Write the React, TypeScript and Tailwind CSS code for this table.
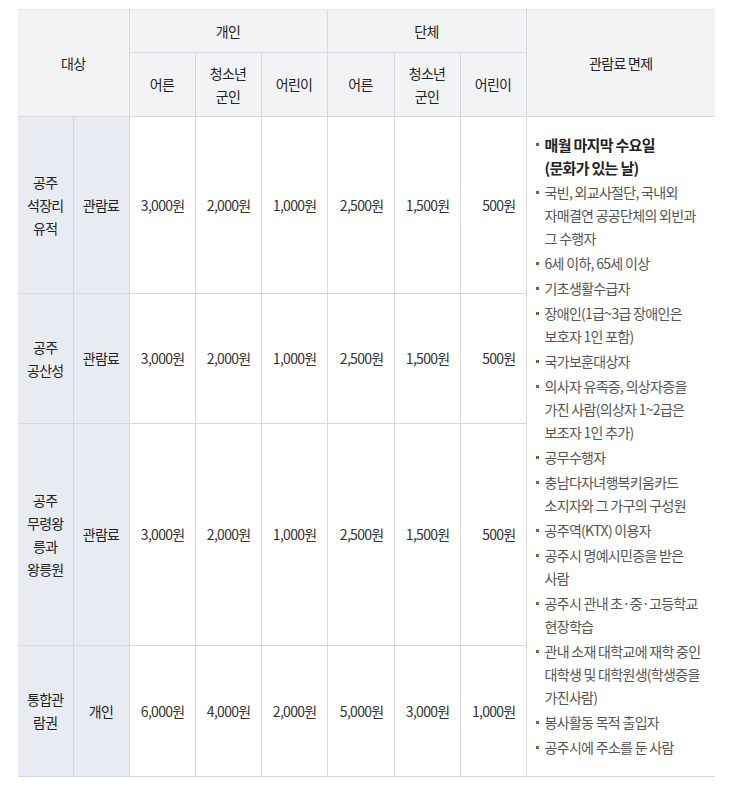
import React from 'react'

const FONT = '[font-family:"Noto_Sans_CJK_KR","Noto_Sans",sans-serif]'

type Row = {
  place: React.ReactNode
  kind: string
  prices: string[]
  height: string
}

const ROWS: Row[] = [
  {
    place: (
      <>
        공주
        <br />
        석장리
        <br />
        유적
      </>
    ),
    kind: '관람료',
    prices: ['3,000원', '2,000원', '1,000원', '2,500원', '1,500원', '500원'],
    height: 'h-[177px]',
  },
  {
    place: (
      <>
        공주
        <br />
        공산성
      </>
    ),
    kind: '관람료',
    prices: ['3,000원', '2,000원', '1,000원', '2,500원', '1,500원', '500원'],
    height: 'h-[130px]',
  },
  {
    place: (
      <>
        공주
        <br />
        무령왕
        <br />
        릉과
        <br />
        왕릉원
      </>
    ),
    kind: '관람료',
    prices: ['3,000원', '2,000원', '1,000원', '2,500원', '1,500원', '500원'],
    height: 'h-[222px]',
  },
  {
    place: (
      <>
        통합관
        <br />
        람권
      </>
    ),
    kind: '개인',
    prices: ['6,000원', '4,000원', '2,000원', '5,000원', '3,000원', '1,000원'],
    height: 'h-[131px]',
  },
]

const EXEMPTIONS: string[][] = [
  ['국빈, 외교사절단, 국내외', '자매결연 공공단체의 외빈과', '그 수행자'],
  ['6세 이하, 65세 이상'],
  ['기초생활수급자'],
  ['장애인(1급~3급 장애인은', '보호자 1인 포함)'],
  ['국가보훈대상자'],
  ['의사자 유족증, 의상자증을', '가진 사람(의상자 1~2급은', '보조자 1인 추가)'],
  ['공무수행자'],
  ['충남다자녀행복키움카드', '소지자와 그 가구의 구성원'],
  ['공주역(KTX) 이용자'],
  ['공주시 명예시민증을 받은', '사람'],
  ['공주시 관내 초·중·고등학교', '현장학습'],
  ['관내 소재 대학교에 재학 중인', '대학생 및 대학원생(학생증을', '가진사람)'],
  ['봉사활동 목적 출입자'],
  ['공주시에 주소를 둔 사람'],
]

const th = 'border border-[#d5d7db] bg-[#f2f3f5] font-normal text-center align-middle text-[#222]'
const side = 'border border-[#d5d7db] bg-[#e8ebf2] text-center align-middle text-[#222]'
const price = 'border border-[#d5d7db] bg-white text-right pr-[10px] align-middle text-[#333] whitespace-nowrap'

function Bullet({ lines, strong }: { lines: string[]; strong?: boolean }) {
  return (
    <li
      className={
        'relative pl-[18px] mb-[2px] ' +
        (strong ? 'font-bold text-[15px] text-[#222]' : 'text-[#555]')
      }
    >
      <span className="absolute left-[9px] top-[10px] size-[3px] bg-[#8b5a3c]" />
      {lines.map((l, i) => (
        <span key={i} className="block whitespace-nowrap">
          {l}
        </span>
      ))}
    </li>
  )
}

export default function App() {
  return (
    <div className={`min-h-[785px] bg-white pt-[9px] pl-[18px] ${FONT} text-[14px] leading-[23px] tracking-[-0.7px]`}>
      <table className="w-[697px] table-fixed border-collapse">
        <colgroup>
          <col className="w-[55px]" />
          <col className="w-[56px]" />
          <col className="w-[66px]" />
          <col className="w-[66px]" />
          <col className="w-[66px]" />
          <col className="w-[67px]" />
          <col className="w-[66px]" />
          <col className="w-[66px]" />
          <col className="w-[189px]" />
        </colgroup>
        <thead>
          <tr className="h-[43px]">
            <th colSpan={2} rowSpan={2} className={`${th} border-l-0 border-t-[#e6e7e9]`}>
              대상
            </th>
            <th colSpan={3} className={`${th} border-t-[#e6e7e9]`}>
              개인
            </th>
            <th colSpan={3} className={`${th} border-t-[#e6e7e9]`}>
              단체
            </th>
            <th rowSpan={2} className={`${th} border-r-0 border-t-[#e6e7e9]`}>
              관람료 면제
            </th>
          </tr>
          <tr className="h-[64px]">
            <th className={th}>어른</th>
            <th className={th}>
              청소년
              <br />
              군인
            </th>
            <th className={th}>어린이</th>
            <th className={th}>어른</th>
            <th className={th}>
              청소년
              <br />
              군인
            </th>
            <th className={th}>어린이</th>
          </tr>
        </thead>
        <tbody>
          {ROWS.map((row, ri) => (
            <tr key={ri} className={row.height}>
              <td className={`${side} border-l-0`}>{row.place}</td>
              <td className={side}>{row.kind}</td>
              {row.prices.map((p, pi) => (
                <td key={pi} className={price}>
                  {p}
                </td>
              ))}
              {ri === 0 && (
                <td rowSpan={4} className="border border-r-0 border-[#d5d7db] bg-white align-top pt-[16px]">
                  <ul>
                    <Bullet strong lines={['매월 마지막 수요일', '(문화가 있는 날)']} />
                    {EXEMPTIONS.map((lines, i) => (
                      <Bullet key={i} lines={lines} />
                    ))}
                  </ul>
                </td>
              )}
            </tr>
          ))}
        </tbody>
      </table>
    </div>
  )
}
